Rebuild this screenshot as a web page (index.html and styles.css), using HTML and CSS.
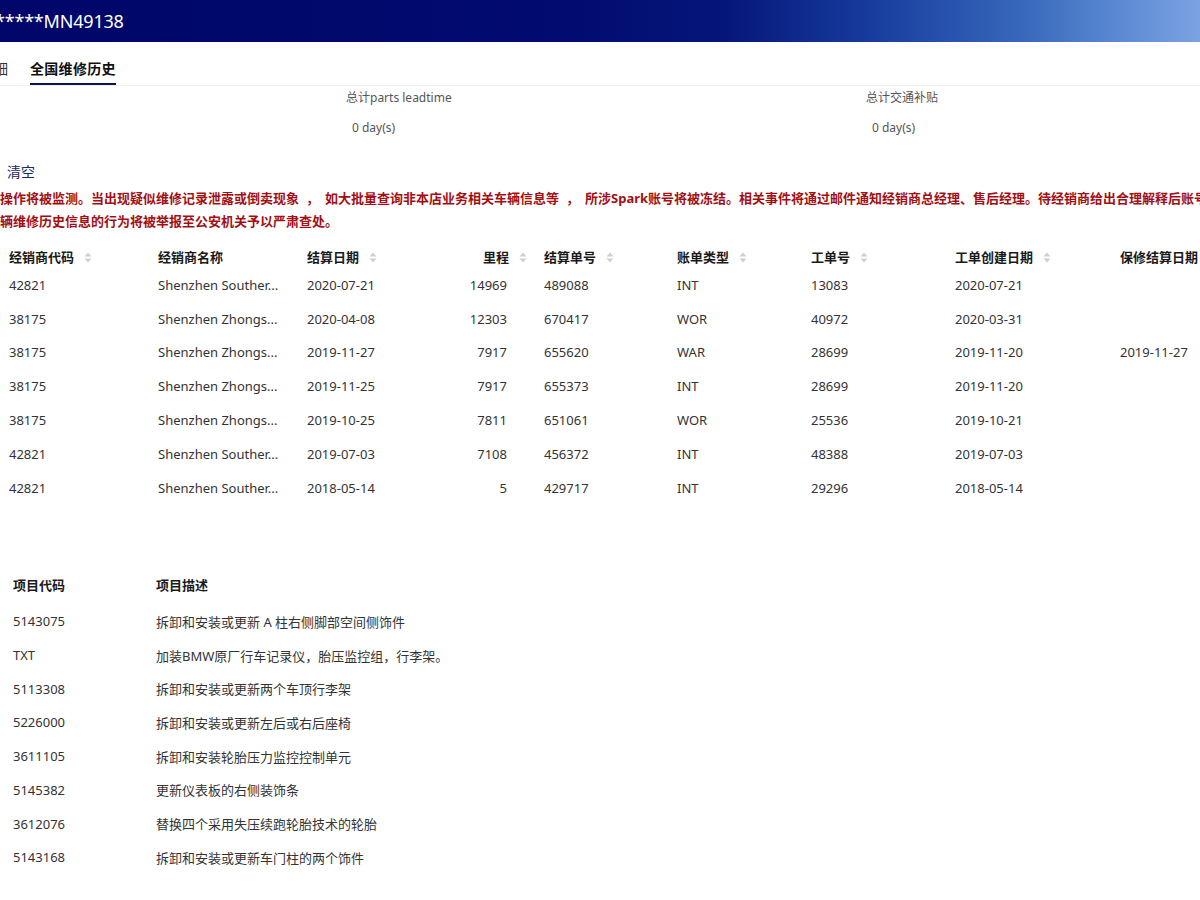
FILE: index.html
```html
<!DOCTYPE html>
<html lang="zh-CN">
<head>
<meta charset="utf-8">
<title>全国维修历史</title>
<link rel="stylesheet" href="styles.css">
</head>
<body>
<header class="topbar"><span class="vin">*****MN49138</span></header>

<nav class="tabs">
  <span class="tab">明细</span>
  <span class="tab active">全国维修历史</span>
</nav>

<section class="summary">
  <div class="stat">
    <div class="stat-label">总计parts leadtime</div>
    <div class="stat-value">0 day(s)</div>
  </div>
  <div class="stat">
    <div class="stat-label">总计交通补贴</div>
    <div class="stat-value">0 day(s)</div>
  </div>
</section>

<div class="actions"><a class="clear">清空</a></div>

<div class="warning">
  <p>操作将被监测。当出现疑似维修记录泄露或倒卖现象<span class="sep">，</span>如大批量查询非本店业务相关车辆信息等<span class="sep">，</span>所涉Spark账号将被冻结。相关事件将通过邮件通知经销商总经理、售后经理。待经销商给出合理解释后账号将被解冻。</p>
  <p>辆维修历史信息的行为将被举报至公安机关予以严肃查处。</p>
</div>

<table class="history">
  <colgroup>
    <col class="c1"><col class="c2"><col class="c3"><col class="c4"><col class="c5"><col class="c6"><col class="c7"><col class="c8"><col class="c9">
  </colgroup>
  <thead>
    <tr>
      <th>经销商代码<i class="sort"><svg viewBox="0 0 8 11" width="8" height="11"><path d="M4 0.5 L7.5 4.5 H0.5 Z"/><path d="M4 10.5 L7.5 6.5 H0.5 Z"/></svg></i></th>
      <th>经销商名称</th>
      <th>结算日期<i class="sort"><svg viewBox="0 0 8 11" width="8" height="11"><path d="M4 0.5 L7.5 4.5 H0.5 Z"/><path d="M4 10.5 L7.5 6.5 H0.5 Z"/></svg></i></th>
      <th class="num">里程<i class="sort"><svg viewBox="0 0 8 11" width="8" height="11"><path d="M4 0.5 L7.5 4.5 H0.5 Z"/><path d="M4 10.5 L7.5 6.5 H0.5 Z"/></svg></i></th>
      <th>结算单号<i class="sort"><svg viewBox="0 0 8 11" width="8" height="11"><path d="M4 0.5 L7.5 4.5 H0.5 Z"/><path d="M4 10.5 L7.5 6.5 H0.5 Z"/></svg></i></th>
      <th>账单类型<i class="sort"><svg viewBox="0 0 8 11" width="8" height="11"><path d="M4 0.5 L7.5 4.5 H0.5 Z"/><path d="M4 10.5 L7.5 6.5 H0.5 Z"/></svg></i></th>
      <th>工单号<i class="sort"><svg viewBox="0 0 8 11" width="8" height="11"><path d="M4 0.5 L7.5 4.5 H0.5 Z"/><path d="M4 10.5 L7.5 6.5 H0.5 Z"/></svg></i></th>
      <th>工单创建日期<i class="sort"><svg viewBox="0 0 8 11" width="8" height="11"><path d="M4 0.5 L7.5 4.5 H0.5 Z"/><path d="M4 10.5 L7.5 6.5 H0.5 Z"/></svg></i></th>
      <th>保修结算日期</th>
    </tr>
  </thead>
  <tbody>
    <tr><td>42821</td><td>Shenzhen Souther...</td><td>2020-07-21</td><td class="num">14969</td><td>489088</td><td>INT</td><td>13083</td><td>2020-07-21</td><td></td></tr>
    <tr><td>38175</td><td>Shenzhen Zhongs...</td><td>2020-04-08</td><td class="num">12303</td><td>670417</td><td>WOR</td><td>40972</td><td>2020-03-31</td><td></td></tr>
    <tr><td>38175</td><td>Shenzhen Zhongs...</td><td>2019-11-27</td><td class="num">7917</td><td>655620</td><td>WAR</td><td>28699</td><td>2019-11-20</td><td>2019-11-27</td></tr>
    <tr><td>38175</td><td>Shenzhen Zhongs...</td><td>2019-11-25</td><td class="num">7917</td><td>655373</td><td>INT</td><td>28699</td><td>2019-11-20</td><td></td></tr>
    <tr><td>38175</td><td>Shenzhen Zhongs...</td><td>2019-10-25</td><td class="num">7811</td><td>651061</td><td>WOR</td><td>25536</td><td>2019-10-21</td><td></td></tr>
    <tr><td>42821</td><td>Shenzhen Souther...</td><td>2019-07-03</td><td class="num">7108</td><td>456372</td><td>INT</td><td>48388</td><td>2019-07-03</td><td></td></tr>
    <tr><td>42821</td><td>Shenzhen Souther...</td><td>2018-05-14</td><td class="num">5</td><td>429717</td><td>INT</td><td>29296</td><td>2018-05-14</td><td></td></tr>
  </tbody>
</table>

<table class="items">
  <colgroup><col class="i1"><col class="i2"></colgroup>
  <thead>
    <tr><th>项目代码</th><th>项目描述</th></tr>
  </thead>
  <tbody>
    <tr><td>5143075</td><td>拆卸和安装或更新 A 柱右侧脚部空间侧饰件</td></tr>
    <tr><td>TXT</td><td>加装BMW原厂行车记录仪，胎压监控组，行李架。</td></tr>
    <tr><td>5113308</td><td>拆卸和安装或更新两个车顶行李架</td></tr>
    <tr><td>5226000</td><td>拆卸和安装或更新左后或右后座椅</td></tr>
    <tr><td>3611105</td><td>拆卸和安装轮胎压力监控控制单元</td></tr>
    <tr><td>5145382</td><td>更新仪表板的右侧装饰条</td></tr>
    <tr><td>3612076</td><td>替换四个采用失压续跑轮胎技术的轮胎</td></tr>
    <tr><td>5143168</td><td>拆卸和安装或更新车门柱的两个饰件</td></tr>
  </tbody>
</table>
</body>
</html>
```

FILE: styles.css
```css
html, body {
  margin: 0;
  padding: 0;
  background: #fff;
  overflow: hidden;
}
body {
  font-family: "Noto Sans", "Noto Sans CJK SC", sans-serif;
  font-size: 13px;
  color: #262626;
  width: 1200px;
  height: 900px;
}

.topbar {
  height: 42px;
  display: flex;
  align-items: center;
  background: linear-gradient(to right, #00066a 0%, #010a6e 45%, #051579 60%, #163a9c 72%, #3767ba 85%, #5a88d2 93%, #7ba3e2 100%);
  overflow: hidden;
}
.vin {
  color: #fff;
  font-size: 18px;
  letter-spacing: -0.2px;
  margin-left: -5px;
  white-space: nowrap;
}

.tabs {
  display: flex;
  gap: 22px;
  padding-top: 17px;
  border-bottom: 1px solid #f0f0f0;
  height: 26px;
  margin-left: -20px;
}
.tab {
  font-size: 14px;
  line-height: 20px;
  color: #333;
  padding-bottom: 4px;
  white-space: nowrap;
}
.tab.active {
  font-weight: 700;
  color: #111;
  border-bottom: 2px solid #0d1452;
  letter-spacing: 0.3px;
}

.summary {
  display: grid;
  grid-template-columns: 520px 520px;
  padding-top: 3px;
  padding-left: 346px;
}
.stat-label {
  font-size: 12px;
  line-height: 18px;
  color: #555;
  white-space: nowrap;
}
.stat-value {
  font-size: 12px;
  line-height: 18px;
  color: #555;
  margin-top: 12px;
  padding-left: 6px;
}

.actions {
  margin-top: 25px;
  padding-left: 7px;
}
.clear {
  font-size: 14px;
  line-height: 20px;
  color: #1b2a5c;
  display: inline-block;
}

.warning {
  margin-top: 5px;
  color: #a30f14;
  font-weight: 700;
  font-size: 13px;
  line-height: 23px;
  white-space: nowrap;
  overflow: hidden;
  width: 1200px;
}
.warning p {
  margin: 0;
}
.warning .sep {
  padding: 0 6px 0 7px;
}

.history {
  margin-top: 11px;
  border-collapse: collapse;
  table-layout: fixed;
  width: 1260px;
}
.c1 { width: 149px; }
.c2 { width: 149px; }
.c3 { width: 150px; }
.c4 { width: 87px; }
.c5 { width: 133px; }
.c6 { width: 134px; }
.c7 { width: 144px; }
.c8 { width: 165px; }
.c9 { width: 149px; }

.history th {
  height: 24px;
  padding: 0 9px;
  text-align: left;
  font-weight: 700;
  color: #1a1a1a;
  white-space: nowrap;
}
.history td {
  height: 33.8px;
  padding: 0 9px;
  color: #333;
  white-space: nowrap;
  overflow: hidden;
}
.history th.num {
  text-align: right;
  padding-right: 8px;
}
.history td.num {
  text-align: right;
  padding-right: 28px;
}
.sort {
  display: inline-block;
  margin-left: 10px;
  vertical-align: -1px;
  line-height: 0;
}
.sort svg path {
  fill: #cfcfcf;
}

.items {
  margin-top: 60px;
  border-collapse: collapse;
  table-layout: fixed;
  width: 713px;
}
.i1 { width: 156px; }
.i2 { width: 557px; }
.items th {
  height: 40px;
  padding: 0 0 0 13px;
  text-align: left;
  font-weight: 700;
  color: #1a1a1a;
}
.items th + th,
.items td + td {
  padding-left: 0;
}
.items td {
  height: 33.7px;
  padding: 0 0 0 13px;
  color: #333;
  white-space: nowrap;
}
```
